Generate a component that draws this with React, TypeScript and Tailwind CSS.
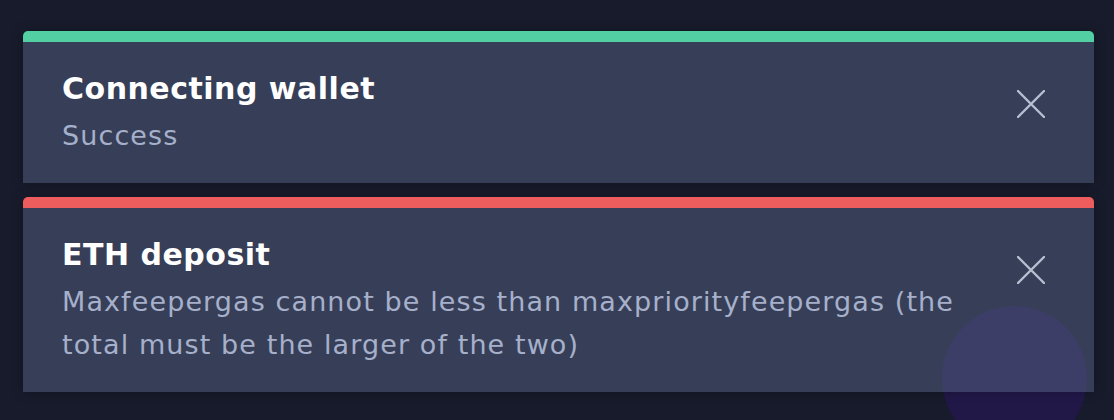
import React from "react";

function CloseIcon() {
  return (
    <svg width="28" height="28" viewBox="0 0 28 28" fill="none">
      <path d="M1 1L27 27M27 1L1 27" stroke="#b9bfd2" strokeWidth="2.4" strokeLinecap="round" />
    </svg>
  );
}

function Toast({ bar, title, body, bodyWidth }: { bar: string; title: string; body: string; bodyWidth?: string }) {
  return (
    <div className="relative z-10 flex flex-col overflow-hidden rounded-t-[5px] shadow-[0_0_12px_rgba(0,0,0,0.25)]">
      <div className={`h-[11px] ${bar}`} />
      <div className="flex items-start justify-between bg-[rgba(87,99,133,0.5)] pl-[39px] pr-[49px]">
        <div className="flex flex-col pt-[27px] pb-[26px]">
          <div className="text-[30px] font-bold leading-[40px] tracking-[0.5px] text-white">{title}</div>
          <div className={`mt-[5px] text-[27px] leading-[43px] tracking-[1.1px] text-[#a6b0cb] ${bodyWidth ?? ""}`}>{body}</div>
        </div>
        <div className="pt-[48px]">
          <CloseIcon />
        </div>
      </div>
    </div>
  );
}

export default function App() {
  return (
    <div
      className="relative h-[420px] w-[1114px] overflow-hidden bg-[#171b2b]"
      style={{ fontFamily: "'DejaVu Sans', sans-serif" }}
    >
      <div className="absolute left-[942px] top-[306px] h-[145px] w-[145px] rounded-full bg-[#211848]" />
      <div className="flex flex-col gap-[14px] pl-[23px] pr-[20px] pt-[31px]">
        <Toast bar="bg-[#52cfa3]" title="Connecting wallet" body="Success" />
        <Toast
          bar="bg-[#ee5d5d]"
          title="ETH deposit"
          body="Maxfeepergas cannot be less than maxpriorityfeepergas (the total must be the larger of the two)"
          bodyWidth="max-w-[920px]"
        />
      </div>
    </div>
  );
}
